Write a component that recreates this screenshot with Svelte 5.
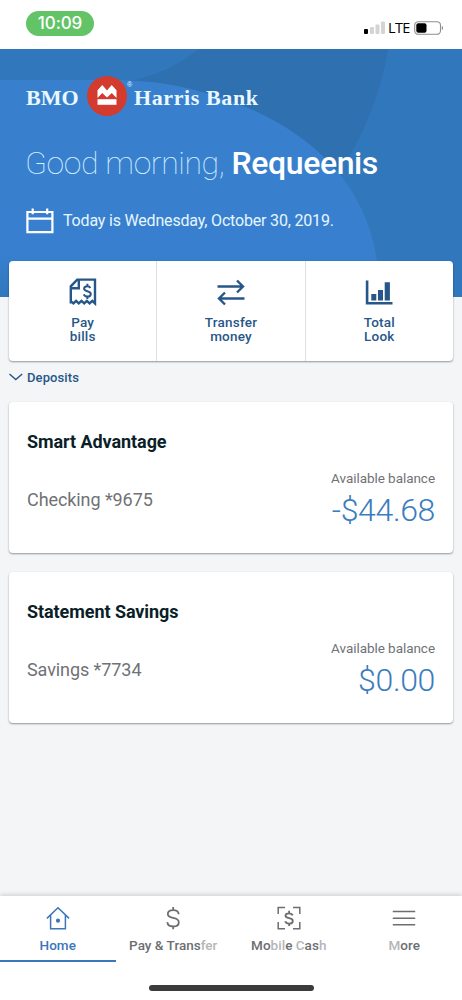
<script>
    let actions = [
        { icon: 'bill', lines: ['Pay', 'bills'] },
        { icon: 'transfer', lines: ['Transfer', 'money'] },
        { icon: 'chart', lines: ['Total', 'Look'] }
    ]

    let accounts = [
        { name: 'Smart Advantage', number: 'Checking *9675', balance: '-$44.68' },
        { name: 'Statement Savings', number: 'Savings *7734', balance: '$0.00' }
    ]

    let tabs = [
        { id: 'home', parts: [['Home', false]] },
        { id: 'pay', parts: [['Pay & Trans', false], ['fer', true]] },
        { id: 'cash', parts: [['Mo', false], ['bil', true], ['e ', false], ['C', true], ['as', false], ['h', true]] },
        { id: 'more', parts: [['M', true], ['ore', false]] }
    ]

    let activeTab = $state('home')
</script>

<div class="phone">
    <div class="status">
        <div class="clock">10:09</div>
        <div class="signal">
            <svg width="22" height="14" viewBox="0 0 22 14">
                <rect x="1" y="8" width="4" height="5" rx="1" fill="#000" />
                <rect x="7" y="6" width="4" height="7" rx="1" fill="#d4d4d4" />
                <rect x="12.5" y="3.5" width="4" height="9.5" rx="1" fill="#d4d4d4" />
                <rect x="18" y="0.5" width="4" height="12.5" rx="1" fill="#d4d4d4" />
            </svg>
            <span class="lte">LTE</span>
            <svg width="30" height="14" viewBox="0 0 30 14">
                <rect x="0.7" y="0.7" width="25.8" height="12.6" rx="3.6" fill="none" stroke="#8e8e8e" stroke-width="1.1" />
                <rect x="2.3" y="2.3" width="10.2" height="9.4" rx="2" fill="#000" />
                <path d="M27.8 4.8c1.8.7 1.8 3.7 0 4.4z" fill="#8e8e8e" />
            </svg>
        </div>
    </div>

    <header class="hero">
        <svg class="backdrop" viewBox="0 0 462 248" preserveAspectRatio="none">
            <defs>
                <linearGradient id="glow" x1="0" y1="0" x2="0" y2="1">
                    <stop offset="0" stop-color="#3880cd" />
                    <stop offset="0.8" stop-color="#3880cf" />
                    <stop offset="1" stop-color="#3177bd" />
                </linearGradient>
            </defs>
            <rect width="462" height="248" fill="#3177bc" />
            <path d="M130 32C158 27 181 14 199 0H388C382 37 369 73 350 106L332 125Z" fill="#2e70b0" />
            <path d="M0 31H110C135 31 160 33 182 38C290 62 365 122 377 213V248H0Z" fill="url(#glow)" />
        </svg>
        <div class="brand">
            <span>BMO</span>
            <svg width="40" height="40" viewBox="0 0 40 40">
                <circle cx="20" cy="20" r="20" fill="#d23b2e" />
                <path d="M10.5 28.8V23.2H29.5V28.8Z" fill="#fff" />
                <path d="M10.5 22V14.2L15.3 9L20 14.4L24.7 9L29.5 14.2V22L24.8 17L20 21.6L15.2 17Z" fill="#fff" />
            </svg>
            <sup>®</sup>
            <span class="harris">Harris Bank</span>
        </div>
        <h1>Good morning, <b>Requeenis</b></h1>
        <div class="today">
            <svg width="28" height="26" viewBox="0 0 28 26" fill="none" stroke="#fff" stroke-width="2.2">
                <path d="M1.4 4H26.4V24.2H1.4ZM1.4 10.6H26.4M6.7 0.6V6.3M21.2 0.6V6.3" />
            </svg>
            <span>Today is Wednesday, October 30, 2019.</span>
        </div>
    </header>

    <main>
        <div class="actions">
            {#each actions as action}
                <button class="action">
                    {#if action.icon === 'bill'}
                        <svg width="28" height="28" viewBox="0 0 28 28" fill="none" stroke="#275789" stroke-width="2.4">
                            <path d="M1.8 25.4V8.3L8.2 1.6H26V25.4L23.3 22.8L20.6 25.4L17.9 22.8L15.2 25.4L12.5 22.8L9.8 25.4L7.1 22.8L4.4 25.4L1.8 23.2M2 10.2H9.8V2" />
                            <path d="M21.4 9.9C20.7 8.7 19.6 8.2 18.2 8.2C16.3 8.2 15.1 9.2 15.1 10.7C15.1 14 21.8 12.3 21.8 15.9C21.8 17.5 20.4 18.5 18.5 18.5C16.8 18.5 15.4 17.8 14.8 16.3M18.4 5.7V8.2M18.4 18.5V21" stroke-width="2" />
                        </svg>
                    {:else if action.icon === 'transfer'}
                        <svg width="28" height="28" viewBox="0 0 28 28" fill="none" stroke="#275789" stroke-width="2.4">
                            <path d="M0.5 8.5H26M20 2.5L26 8.5L20 14.5M27.5 20.5H2M8 14.5L2 20.5L8 26.5" />
                        </svg>
                    {:else}
                        <svg width="28" height="28" viewBox="0 0 28 28" fill="#275789">
                            <path d="M0.8 2.5H3.4V24H27.5V26.5H0.8ZM6.3 16H11.3V22.5H6.3ZM13 12H18V22.5H13ZM19.7 4.2H24.9V22.5H19.7Z" />
                        </svg>
                    {/if}
                    <span>{action.lines[0]}<br />{action.lines[1]}</span>
                </button>
            {/each}
        </div>

        <div class="section">
            <svg width="14" height="8" viewBox="0 0 14 8" fill="none" stroke="#275789" stroke-width="1.4">
                <path d="M0.5 1L6.8 6.6L13.2 1" />
            </svg>
            <span>Deposits</span>
        </div>

        {#each accounts as account}
            <div class="account">
                <h2>{account.name}</h2>
                <div class="details">
                    <div class="number">{account.number}</div>
                    <div class="balance">
                        <div class="caption">Available balance</div>
                        <div class="amount">{account.balance}</div>
                    </div>
                </div>
            </div>
        {/each}
    </main>

    <nav>
        <div class="tabs">
            {#each tabs as tab}
                <button class="tab" class:active={activeTab === tab.id} onclick={() => (activeTab = tab.id)}>
                    <svg width="24" height="24" viewBox="0 0 24 24" fill="none" stroke="currentColor" stroke-width="1.5">
                        {#if tab.id === 'home'}
                            <path d="M0.9 12.4L12 1.8L23.1 12.4M4.6 9.3V22.7H19.4V9.3" />
                            <circle cx="12" cy="14.7" r="2.1" fill="currentColor" stroke="none" />
                        {:else if tab.id === 'pay'}
                            <path d="M17.7 8.2C17.5 5.7 15.2 4.1 12.2 4.1C9 4.1 6.8 5.6 6.8 8C6.8 13.8 17.8 9.8 17.8 16.2C17.8 18.8 15.5 20.5 12.2 20.5C8.8 20.5 6.6 18.8 6.3 16.1M12.2 1V4.1M12.2 20.5V23.3" stroke-width="1.8" />
                        {:else if tab.id === 'cash'}
                            <path d="M8 1.4H1.2V8M16 1.4H22.8V8M1.2 16V22.7H8M16 22.7H22.8V16" />
                            <path d="M15.7 9.4C15.2 8 13.8 7.3 12 7.3C9.9 7.3 8.5 8.3 8.5 9.8C8.5 13.3 15.8 11.1 15.8 14.9C15.8 16.6 14.3 17.6 12.2 17.6C10.2 17.6 8.7 16.8 8.2 15.2M12.1 4.8V7.3M12.1 17.6V20.1" stroke-width="1.8" />
                        {:else}
                            <path d="M0.8 5.6H23.2M0.8 12.2H23.2M0.8 18.8H23.2" />
                        {/if}
                    </svg>
                    <span>{#each tab.parts as [text, faded]}<i class:faded>{text}</i>{/each}</span>
                </button>
            {/each}
        </div>
        <div class="home-bar"></div>
    </nav>
</div>

<style>
    :global(body) {
        margin: 0;
        background: #fff;
    }

    * {
        box-sizing: border-box;
    }

    svg {
        display: block;
        flex: none;
    }

    button {
        border: 0;
        padding: 0;
        background: none;
        font: inherit;
        cursor: pointer;
    }

    .phone {
        width: 462px;
        height: 1000px;
        display: flex;
        flex-direction: column;
        overflow: hidden;
        background: #f3f5f7;
        font-family: Roboto, "Liberation Sans", sans-serif;
    }

    .status {
        flex: none;
        height: 49px;
        padding: 11px 18px 0 26px;
        display: flex;
        justify-content: space-between;
        align-items: flex-start;
        background: #fff;
    }

    .clock {
        width: 68px;
        height: 25px;
        border-radius: 13px;
        background: #62c466;
        color: #fff;
        font: 500 17px/25px Inter, sans-serif;
        letter-spacing: -0.1px;
        text-align: center;
    }

    .signal {
        display: flex;
        align-items: center;
        gap: 3px;
        padding-top: 10px;
    }

    .lte {
        width: 23px;
        font: 500 14.5px/14px "Open Sans", sans-serif;
        letter-spacing: -0.6px;
        white-space: nowrap;
        color: #000;
    }

    .hero {
        position: relative;
        flex: none;
        height: 248px;
        padding: 27px 26px 0;
        color: #fff;
    }

    .backdrop {
        position: absolute;
        inset: 0;
        width: 100%;
        height: 100%;
    }

    .brand, h1, .today {
        position: relative;
    }

    .brand {
        display: flex;
        align-items: center;
        height: 40px;
        font: bold 22px/40px "Liberation Serif", serif;
        color: #e9f8ff;
    }

    .brand span {
        width: 61px;
        padding-top: 3px;
        white-space: nowrap;
    }

    .brand sup {
        align-self: flex-start;
        width: 7px;
        padding-top: 5px;
        font: 7px/7px "Liberation Sans", sans-serif;
    }

    .brand .harris {
        width: auto;
        letter-spacing: 0.6px;
    }

    h1 {
        margin: 28px 0 0 -1px;
        font-size: 32px;
        line-height: 38px;
        font-weight: 100;
        letter-spacing: -0.4px;
        white-space: nowrap;
        color: #d4f1ff;
    }

    h1 b {
        font-weight: 500;
        color: #fff;
    }

    .today {
        display: flex;
        align-items: center;
        gap: 9px;
        margin-top: 26px;
        font-size: 16px;
        line-height: 26px;
        letter-spacing: -0.18px;
        color: #e6f6ff;
    }

    main {
        flex: 1;
        padding: 0 9px;
        margin-top: -36px;
        position: relative;
    }

    .actions {
        display: flex;
        height: 100px;
        border-radius: 4px;
        background: #fff;
        box-shadow: 0 1px 2px rgba(0, 0, 0, 0.4);
    }

    .action {
        flex: 1;
        display: flex;
        flex-direction: column;
        align-items: center;
        padding-top: 17px;
        gap: 9px;
        font-size: 13.5px;
        line-height: 14px;
        font-weight: 500;
        letter-spacing: 0.2px;
        color: #275789;
    }

    .action + .action {
        border-left: 1px solid #dedfe1;
    }

    .section {
        display: flex;
        align-items: center;
        gap: 4px;
        height: 32px;
        margin-bottom: 9px;
        font-size: 13px;
        font-weight: 500;
        letter-spacing: 0.1px;
        color: #275789;
    }

    .account {
        height: 151px;
        margin-bottom: 19px;
        padding: 29px 18px 0;
        border-radius: 4px;
        background: #fff;
        box-shadow: 0 1px 2px rgba(0, 0, 0, 0.4);
    }

    h2 {
        margin: 0;
        font-size: 18px;
        line-height: 22px;
        font-weight: 700;
        letter-spacing: -0.07px;
        color: #0b1f28;
    }

    .details {
        display: flex;
        justify-content: space-between;
        align-items: center;
        margin-top: 16px;
        color: #6f7276;
    }

    .number {
        font-size: 18px;
        line-height: 22px;
        letter-spacing: -0.08px;
    }

    .balance {
        text-align: right;
    }

    .caption {
        padding-bottom: 2px;
        font-size: 13.5px;
        line-height: 18px;
        letter-spacing: -0.05px;
    }

    .amount {
        font-size: 32px;
        line-height: 42px;
        font-weight: 300;
        letter-spacing: -0.35px;
        color: #3b7dbd;
    }

    nav {
        position: relative;
        flex: none;
        height: 104px;
        background: #fff;
        box-shadow: 0 -2px 4px rgba(0, 0, 0, 0.12);
    }

    .tabs {
        display: flex;
        height: 66px;
    }

    .tab {
        flex: 1;
        display: flex;
        flex-direction: column;
        align-items: center;
        gap: 6px;
        padding-top: 10px;
        border-bottom: 2px solid transparent;
        font-size: 13.5px;
        line-height: 18px;
        font-weight: 500;
        letter-spacing: 0.02px;
        color: #6c6e71;
        white-space: pre;
    }

    .tab.active {
        color: #3b77b9;
        border-color: #3b77b9;
    }

    .tab i {
        font-style: normal;
    }

    .tab .faded {
        opacity: 0.5;
    }

    .home-bar {
        width: 165px;
        height: 6px;
        margin: 23px auto 0;
        border-radius: 3px;
        background: #3b3b3c;
    }
</style>
